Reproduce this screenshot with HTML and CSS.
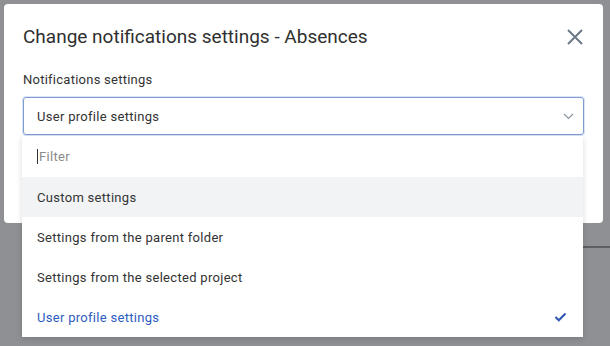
FILE: index.html
```html
<!DOCTYPE html>
<html lang="en">
<head>
    <meta charset="UTF-8">
    <title>Change notifications settings</title>
    <link rel="stylesheet" href="styles.css">
</head>
<body>
    <div class="backdrop-line"></div>
    <div class="dialog">
        <div class="dialog-header">
            <h1>Change notifications settings - Absences</h1>
            <button class="close" aria-label="Close">
                <svg width="16" height="16" viewBox="0 0 16 16"><path d="M1 1L15 15M15 1L1 15" stroke="#6b7989" stroke-width="2" fill="none"/></svg>
            </button>
        </div>
        <label class="field-label">Notifications settings</label>
        <div class="select">
            <div class="select-box">
                <span>User profile settings</span>
                <svg width="11" height="7" viewBox="0 0 11 7"><path d="M1 1L5.5 5.5L10 1" stroke="#8a94a0" stroke-width="1.2" fill="none"/></svg>
            </div>
            <div class="menu">
                <div class="menu-filter"><span class="caret"></span>Filter</div>
                <div class="menu-item hover">Custom settings</div>
                <div class="menu-item">Settings from the parent folder</div>
                <div class="menu-item">Settings from the selected project</div>
                <div class="menu-item selected">
                    <span>User profile settings</span>
                    <svg width="13" height="10" viewBox="0 0 13 10"><path d="M1.5 5L4.8 8.3L11.5 1.5" stroke="#2d55b0" stroke-width="2" fill="none"/></svg>
                </div>
            </div>
        </div>
    </div>
</body>
</html>
```

FILE: styles.css
```css
body {
    margin: 0;
    padding: 4px;
    height: 346px;
    box-sizing: border-box;
    background-color: #8f9094;
    font-family: Roboto, 'Liberation Sans', sans-serif;
    color: #333;
    overflow: hidden;
}
.backdrop-line {
    position: absolute;
    left: 583px;
    top: 246px;
    width: 27px;
    height: 2px;
    background: #5d5e62;
}
.dialog {
    width: 599px;
    height: 219px;
    box-sizing: border-box;
    background: #fff;
    border-radius: 4px;
    padding: 20px 19px 0 19px;
}
.dialog-header {
    display: flex;
    align-items: center;
    justify-content: space-between;
    height: 25px;
}
h1 {
    margin: 0;
    font-size: 19px;
    font-weight: 400;
    color: #2f2f2f;
}
.close {
    border: none;
    background: none;
    padding: 0;
    margin-right: 1px;
    display: flex;
}
.field-label {
    display: block;
    margin-top: 23px;
    font-size: 13px;
    line-height: 16px;
    letter-spacing: 0.25px;
    color: #333;
}
.select {
    position: relative;
    margin-top: 9px;
}
.select-box {
    height: 38px;
    box-sizing: border-box;
    border: 1px solid #7f9bd0;
    border-radius: 3px;
    box-shadow: 0 0 0 1px #dbe4f5;
    display: flex;
    align-items: center;
    justify-content: space-between;
    padding: 0 9px 0 13px;
    font-size: 13px;
    letter-spacing: 0.3px;
    color: #333;
}
.menu {
    position: absolute;
    left: -1px;
    top: 39px;
    width: 561px;
    background: #fff;
    box-shadow: 0 2px 6px rgba(0, 0, 0, 0.15);
    font-size: 13px;
    letter-spacing: 0.3px;
}
.menu-filter {
    height: 41px;
    display: flex;
    align-items: center;
    padding-left: 15px;
    color: #8a8a8a;
}
.caret {
    width: 1px;
    height: 15px;
    background: #333;
    margin-right: 1px;
}
.menu-item {
    height: 40px;
    display: flex;
    align-items: center;
    justify-content: space-between;
    padding: 0 16px 0 15px;
    color: #333;
}
.menu-item.hover {
    background: #f2f3f5;
}
.menu-item.selected {
    color: #2d5cbf;
}
```
